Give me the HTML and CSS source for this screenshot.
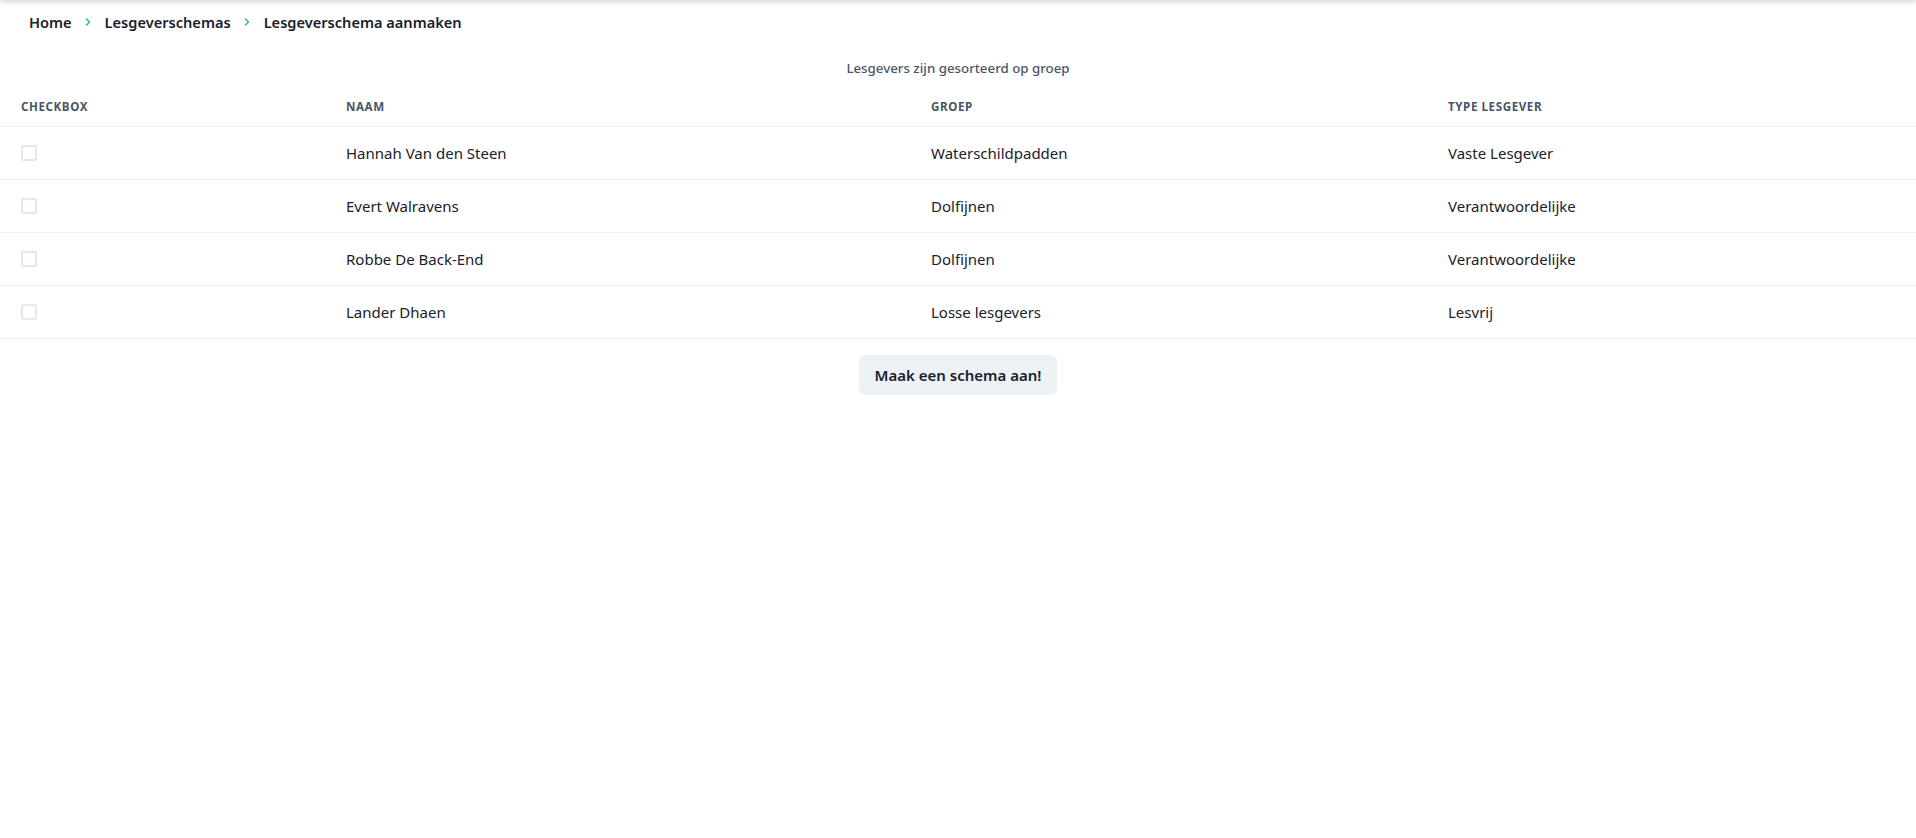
FILE: index.html
```html
<!DOCTYPE html>
<html lang="nl">
<head>
<meta charset="utf-8">
<title>Lesgeverschema aanmaken</title>
<link rel="stylesheet" href="styles.css">
</head>
<body>
<div class="topshadow"></div>
<nav class="breadcrumb">
  <a class="crumb" href="#">Home</a>
  <span class="sep"><svg width="8" height="10" viewBox="0 0 8 10"><path d="M2.5 2l3 3-3 3" fill="none" stroke="#2fb5a8" stroke-width="1.5" stroke-linecap="round" stroke-linejoin="round"/></svg></span>
  <a class="crumb" href="#">Lesgeverschemas</a>
  <span class="sep"><svg width="8" height="10" viewBox="0 0 8 10"><path d="M2.5 2l3 3-3 3" fill="none" stroke="#2fb5a8" stroke-width="1.5" stroke-linecap="round" stroke-linejoin="round"/></svg></span>
  <span class="crumb current">Lesgeverschema aanmaken</span>
</nav>
<table class="table">
  <caption class="caption">Lesgevers zijn gesorteerd op groep</caption>
  <colgroup>
    <col class="c1"><col class="c2"><col class="c3"><col class="c4">
  </colgroup>
  <thead>
    <tr><th>Checkbox</th><th>Naam</th><th>Groep</th><th>Type lesgever</th></tr>
  </thead>
  <tbody>
    <tr><td><span class="checkbox"></span></td><td>Hannah Van den Steen</td><td>Waterschildpadden</td><td>Vaste Lesgever</td></tr>
    <tr><td><span class="checkbox"></span></td><td>Evert Walravens</td><td>Dolfijnen</td><td>Verantwoordelijke</td></tr>
    <tr><td><span class="checkbox"></span></td><td>Robbe De Back-End</td><td>Dolfijnen</td><td>Verantwoordelijke</td></tr>
    <tr><td><span class="checkbox"></span></td><td>Lander Dhaen</td><td>Losse lesgevers</td><td>Lesvrij</td></tr>
  </tbody>
</table>
<div class="actions">
  <button class="btn">Maak een schema aan!</button>
</div>
</body>
</html>
```
FILE: styles.css
```css
* { box-sizing: border-box; }
html, body { margin: 0; padding: 0; background: #fff; }
body {
  font-family: "Noto Sans", "Open Sans", sans-serif;
  color: #1a202c;
  font-size: 16px;
  overflow: hidden;
}
.topshadow {
  position: absolute;
  top: -10px; left: 0; right: 0;
  height: 10px;
  box-shadow: 0 1px 6px rgba(0,0,0,0.22);
}
.breadcrumb {
  display: flex;
  align-items: center;
  height: 50px;
  padding: 0 0 6px 29px;
  font-size: 14.6px;
  font-weight: 600;
}
.crumb { color: #1a202c; text-decoration: none; }
.sep { display: inline-flex; width: 33px; justify-content: center; }
.table {
  width: 100%;
  border-collapse: collapse;
  table-layout: fixed;
}
.c1 { width: 325px; }
.c2 { width: 585px; }
.c3 { width: 517px; }
.caption {
  caption-side: top;
  font-size: 13.3px;
  font-weight: 500;
  color: #4a5568;
  padding: 8px 0;
  line-height: 20px;
  text-align: center;
}
th {
  text-align: left;
  font-size: 11.6px;
  font-weight: 700;
  text-transform: uppercase;
  letter-spacing: 0.05em;
  color: #4a5568;
  padding: 13px 21px 11px;
  line-height: 16px;
  border-bottom: 1px solid #edf2f7;
}
td {
  padding: 16px 21px;
  line-height: 20px;
  font-size: 15px;
  border-bottom: 1px solid #edf2f7;
  vertical-align: top;
}
.checkbox {
  display: block;
  width: 16px; height: 16px;
  margin-top: 2px;
  border: 2px solid #e2e8f0;
  border-radius: 2px;
}
.actions {
  display: flex;
  justify-content: center;
  margin-top: 16px;
}
.btn {
  font-family: inherit;
  height: 40px;
  padding: 0 16px;
  font-size: 15px;
  font-weight: 600;
  color: #1a202c;
  background: #edf2f7;
  border: none;
  border-radius: 6px;
}
```
